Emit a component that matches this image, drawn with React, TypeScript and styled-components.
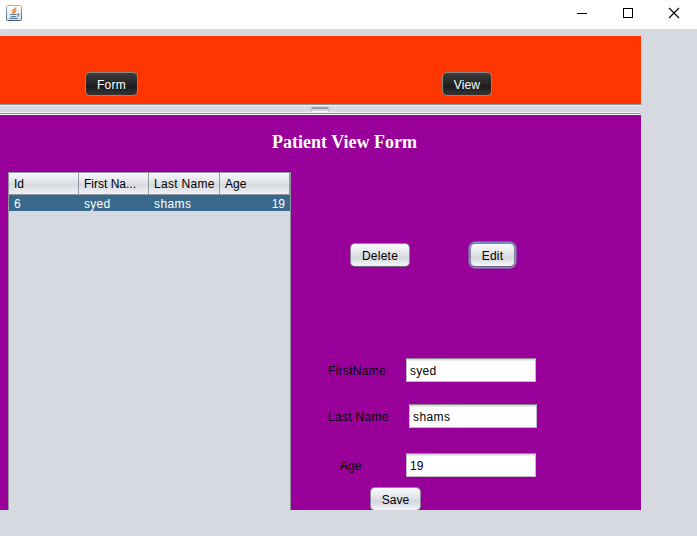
import React from "react";
import styled, { createGlobalStyle, css } from "styled-components";

const GlobalStyle = createGlobalStyle`
  * { box-sizing: border-box; }
  body { margin: 0; background: #d6d9df; overflow: hidden; }
`;

const Window = styled.div`
  width: 697px;
  height: 536px;
  overflow: hidden;
  background: #d6d9df;
  color: #000;
  font: 12px/16px "Liberation Sans", Arial, sans-serif;
`;

const TitleBar = styled.header`
  display: flex;
  justify-content: space-between;
  height: 29px;
  padding: 5px 17px 0 6px;
  background: #fff;
`;

const WindowControls = styled.div`
  display: flex;
  gap: 34px;
  padding-top: 2px;
`;

const Content = styled.main`
  width: 641px;
  margin-top: 7px;
`;

const NavPanel = styled.nav`
  display: flex;
  height: 68px;
  padding: 36px 0 0 85px;
  gap: 304px;
  background: #ff3600;
`;

const Divider = styled.div`
  display: flex;
  justify-content: center;
  height: 11px;
  border-top: 1px solid #8e949c;
  border-bottom: 1px solid #fff;
  padding-top: 2px;
  background: linear-gradient(#f4f5f8 0 1px, #d6d9df 1px 7px, #eef0f4 7px 8px, #8e949c 8px 9px);
`;

const Grip = styled.span`
  width: 18px;
  height: 5px;
  margin-right: 1px;
  border: 1px solid #b4b9c1;
  border-top: 2px solid #979da6;
  border-bottom: 1px solid #fafbfc;
  border-radius: 2px;
  background: #d3d6dc;
`;

const ViewPanel = styled.section`
  display: flex;
  flex-direction: column;
  height: 395px;
  padding-left: 8px;
  overflow: hidden;
  background: #990099;
`;

const Heading = styled.h1`
  flex: none;
  height: 57px;
  margin: 0;
  padding: 17px 0 0 264px;
  color: #fff;
  font: bold 18px/20px "Liberation Serif", "Times New Roman", serif;
  white-space: nowrap;
`;

const Body = styled.div`
  display: flex;
  flex: 1;
  min-height: 0;
`;

const Table = styled.div`
  width: 283px;
  height: 338px;
  border: 1px solid #90959e;
  border-bottom: 0;
  background: #d6d9df;
`;

const columns = css`
  display: grid;
  grid-template-columns: 70px 70px 71px 70px;
`;

const HeaderRow = styled.div`
  ${columns}
  height: 22px;
  border-bottom: 1px solid #8f949d;
  background: linear-gradient(#f7f8fa 0, #dfe1e6 48%, #d6d9df 55%, #f0f2f6 100%);
`;

const HeaderCell = styled.div`
  padding: 3px 0 0 5px;
  border-right: 1px solid #9297a1;
  white-space: nowrap;
`;

const DataRow = styled.div`
  ${columns}
  height: 16px;
  background: #39698a;
  color: #fff;
`;

const Cell = styled.div<{ $numeric?: boolean }>`
  padding: 0 5px;
  line-height: 18px;
  text-align: ${(p) => (p.$numeric ? "right" : "left")};
`;

const Letters = styled.span<{ $spacing?: number }>`
  letter-spacing: ${(p) => p.$spacing ?? 0}px;
`;

const Editor = styled.div`
  width: 350px;
`;

const Actions = styled.div`
  display: flex;
  gap: 60px;
  height: 186px;
  padding: 71px 0 0 59px;
`;

const Button = styled.button<{ $width: number; $dark?: boolean; $focused?: boolean }>`
  flex: none;
  width: ${(p) => p.$width}px;
  height: 24px;
  padding: 1px 0 0;
  border: 1px solid #8b8598;
  border-bottom-color: #6c6478;
  border-radius: 5px;
  background: linear-gradient(#fafafc 0, #e4e6ea 40%, #d4d7dd 62%, #f4f6fa 100%);
  color: #000;
  font: inherit;
  white-space: nowrap;
  ${(p) => p.$focused && css`box-shadow: 0 0 0 1.5px #7296c6;`}
  ${(p) =>
    p.$dark &&
    css`
      border-color: #8c8783;
      background: linear-gradient(#3c3c3c 0, #272727 45%, #1d1d1d 60%, #343434 100%);
      color: #fff;
    `}
`;

const Field = styled.label<{ $height: number; $indent?: number; $labelWidth: number }>`
  display: grid;
  grid-template-columns: ${(p) => p.$labelWidth}px auto;
  justify-content: start;
  height: ${(p) => p.$height}px;
  padding-left: ${(p) => p.$indent ?? 37}px;
  line-height: 26px;
`;

const Input = styled.input<{ $width: number; $spacing?: number }>`
  width: ${(p) => p.$width}px;
  height: 24px;
  padding: 2px 3px 0;
  border: 1px solid #c0b9c6;
  border-top-color: #8d8891;
  border-radius: 0;
  outline: 0;
  background: linear-gradient(#d7d7dc 0 1px, #fff 2px);
  color: #000;
  font: inherit;
  letter-spacing: ${(p) => p.$spacing ?? 0}px;
`;

const SaveRow = styled.div`
  display: flex;
  padding-left: 79px;
`;

const JavaIcon = () => (
  <svg width="16" height="16" viewBox="0 0 16 16" fill="none">
    <defs>
      <linearGradient id="tile" x2="0" y2="1">
        <stop stopColor="#fff" />
        <stop offset="1" stopColor="#d9dfe6" />
      </linearGradient>
      <linearGradient id="edge" x2="0" y2="1">
        <stop stopColor="#a4b2bd" />
        <stop offset="1" stopColor="#405f7a" />
      </linearGradient>
    </defs>
    <rect x=".5" y=".5" width="15" height="15" rx="1" fill="url(#tile)" stroke="url(#edge)" />
    <path d="M9.8 2.5C9.8 4.4 6 5 6.6 6.9l1.2 1.6M10.5 4.8C8.7 5.6 8.2 6.8 9.2 8.1" stroke="#e98431" strokeWidth="1.4" />
    <path d="M4 9.5h6.6M5 11.5h5M3.5 13.4h8M11 9.2c2.8-1 2.5 1.5.2 2.2" stroke="#57809f" strokeWidth="1.1" />
  </svg>
);

const MinimizeIcon = () => (
  <svg width="12" height="12" viewBox="0 0 12 12"><path d="M1 6.5h10" stroke="#000" /></svg>
);
const MaximizeIcon = () => (
  <svg width="12" height="12" viewBox="0 0 12 12"><rect x="1.5" y="1.5" width="9" height="9" fill="none" stroke="#000" /></svg>
);
const CloseIcon = () => (
  <svg width="12" height="12" viewBox="0 0 12 12"><path d="m1 1 10 10M11 1 1 11" stroke="#000" strokeWidth="1.1" /></svg>
);

export default function App() {
  return (
    <Window>
      <GlobalStyle />
      <TitleBar>
        <JavaIcon />
        <WindowControls>
          <MinimizeIcon />
          <MaximizeIcon />
          <CloseIcon />
        </WindowControls>
      </TitleBar>
      <Content>
        <NavPanel>
          <Button $width={53} $dark><Letters $spacing={0.3}>Form</Letters></Button>
          <Button $width={50} $dark><Letters $spacing={0.15}>View</Letters></Button>
        </NavPanel>
        <Divider><Grip /></Divider>
        <ViewPanel>
          <Heading>Patient View Form</Heading>
          <Body>
            <Table>
              <HeaderRow>
                <HeaderCell>Id</HeaderCell>
                <HeaderCell>First Na...</HeaderCell>
                <HeaderCell><Letters $spacing={0.3}>Last Name</Letters></HeaderCell>
                <HeaderCell>Age</HeaderCell>
              </HeaderRow>
              <DataRow>
                <Cell>6</Cell>
                <Cell><Letters $spacing={0.25}>syed</Letters></Cell>
                <Cell><Letters $spacing={0.4}>shams</Letters></Cell>
                <Cell $numeric>19</Cell>
              </DataRow>
            </Table>
            <Editor>
              <Actions>
                <Button $width={60}><Letters $spacing={0.25}>Delete</Letters></Button>
                <Button $width={45} $focused><Letters $spacing={0.2}>Edit</Letters></Button>
              </Actions>
              <Field $height={46} $labelWidth={78}>
                <Letters $spacing={0.3}>FirstName</Letters>
                <Input $width={130} $spacing={0.25} defaultValue="syed" />
              </Field>
              <Field $height={49} $labelWidth={81}>
                <Letters $spacing={0.3}>Last Name</Letters>
                <Input $width={128} $spacing={0.4} defaultValue="shams" />
              </Field>
              <Field $height={34} $indent={49} $labelWidth={66}>
                <span>Age</span>
                <Input $width={130} defaultValue="19" />
              </Field>
              <SaveRow><Button $width={51}>Save</Button></SaveRow>
            </Editor>
          </Body>
        </ViewPanel>
      </Content>
    </Window>
  );
}
